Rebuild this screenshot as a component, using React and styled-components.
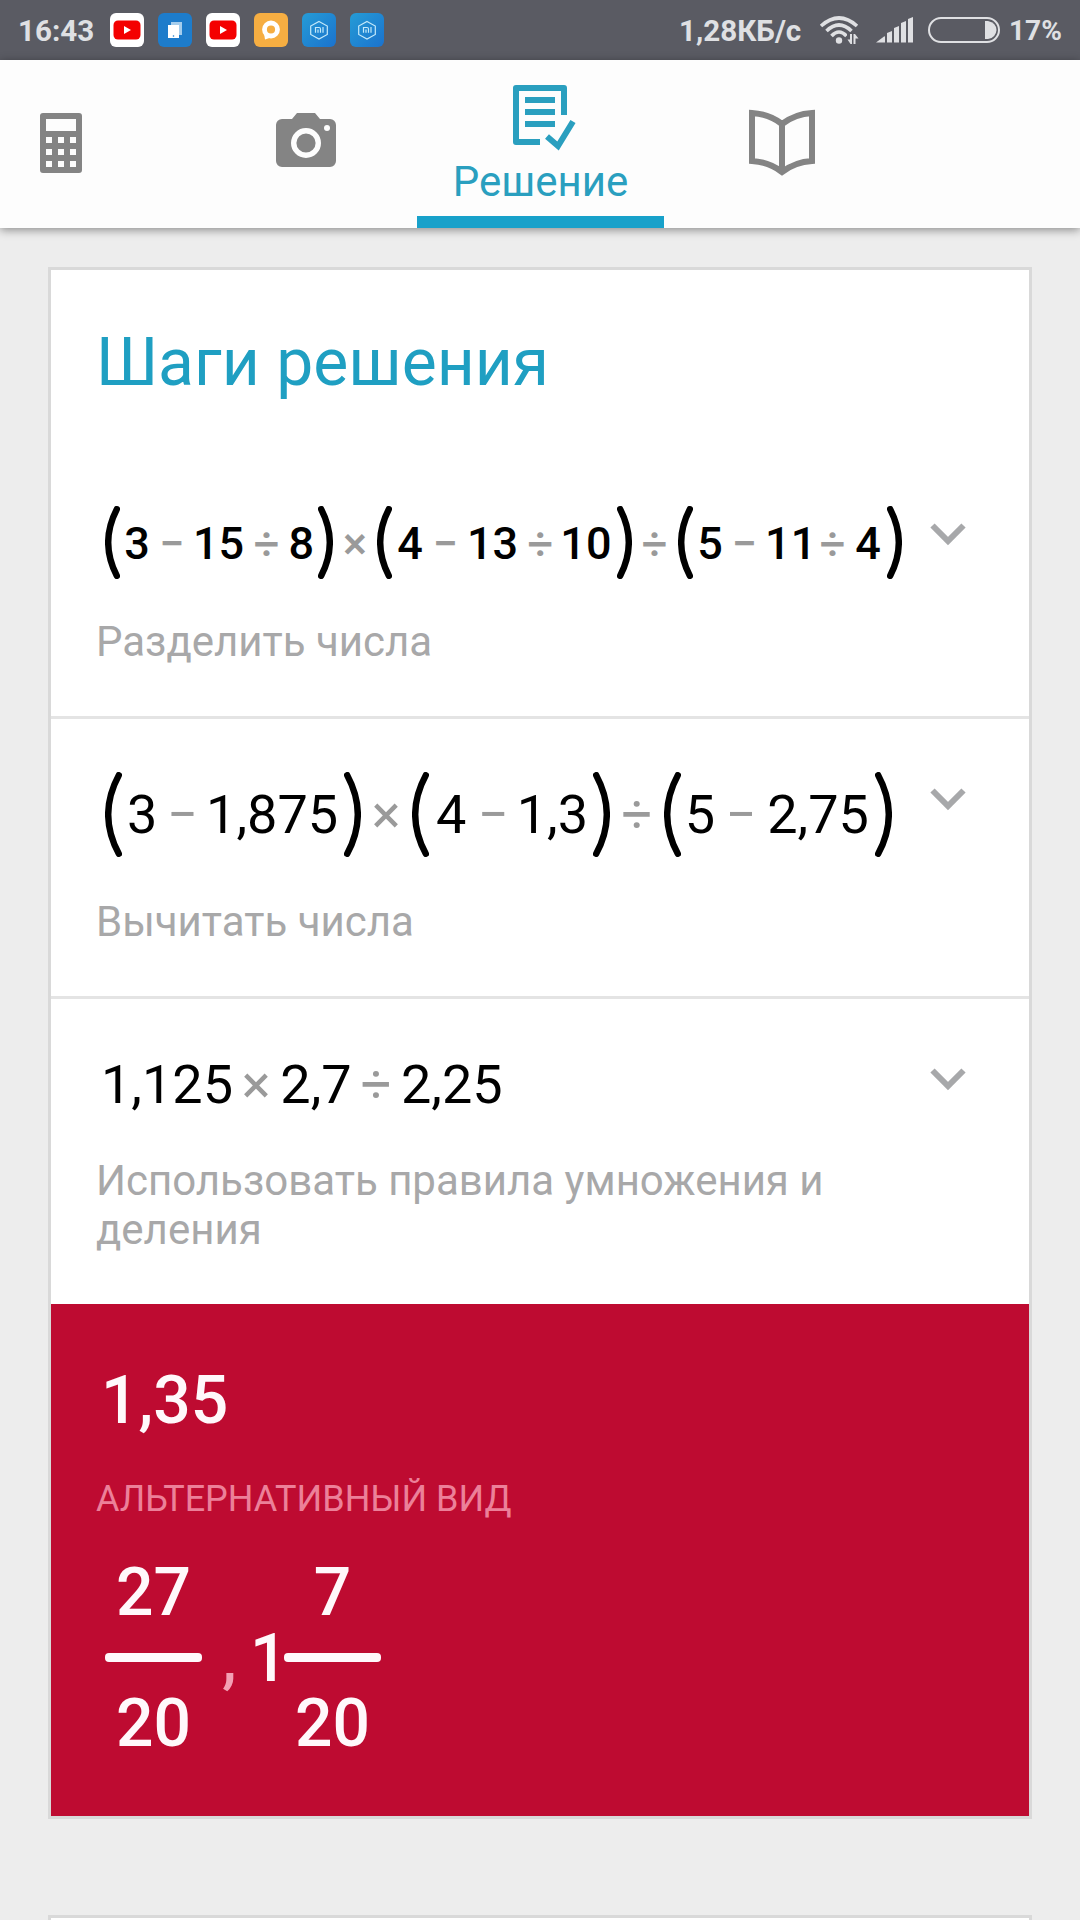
import React from "react";
import styled, { createGlobalStyle, css } from "styled-components";

const GlobalStyle = createGlobalStyle`
  * {
    box-sizing: border-box;
  }

  body {
    margin: 0;
    background: #ededed;
    font-family: Roboto, "Noto Sans", sans-serif;
  }
`;

const Screen = styled.div`
  display: flex;
  flex-direction: column;
  width: 1080px;
  height: 1920px;
  overflow: hidden;
  background: #ededed;
`;

const StatusBar = styled.div`
  display: flex;
  align-items: center;
  flex: none;
  height: 60px;
  padding: 0 19px 0 18px;
  background: #5a5b63;
  color: #dfe0e3;
`;

const StatusText = styled.span`
  width: ${(p) => p.$width}px;
  padding-top: 1px;
  font-size: ${(p) => p.$size}px;
  font-weight: 700;
  line-height: 60px;
  white-space: nowrap;
`;

const AppIcons = styled.div`
  display: flex;
  gap: 14px;
  margin-right: auto;

  svg {
    display: block;
  }
`;

const StatusIcon = styled.svg`
  display: block;
  flex: none;
  margin-right: ${(p) => p.$gap}px;
`;

const Tabs = styled.nav`
  position: relative;
  z-index: 1;
  display: flex;
  flex: none;
  height: 168px;
  background: #fdfdfd;
  box-shadow: 0 2px 9px rgba(0, 0, 0, 0.42);
`;

const Tab = styled.div`
  display: flex;
  flex-direction: column;
  align-items: center;
  justify-content: center;
  width: ${(p) => p.$width}px;
  margin-right: ${(p) => p.$gap || 0}px;
  padding-bottom: 2px;
  color: #848484;

  svg {
    display: block;
    overflow: visible;
  }

  ${(p) =>
    p.$active &&
    css`
      justify-content: flex-start;
      padding-top: 25px;
      color: #2a9fbf;
      border-bottom: 12px solid #18a1ca;
    `}
`;

const TabLabel = styled.span`
  margin-top: 6px;
  font-size: 42px;
  line-height: 49px;
`;

const Card = styled.section`
  flex: none;
  width: 984px;
  min-height: 60px;
  margin: ${(p) => p.$top}px 48px 0;
  border: 3px solid #d9d9d9;
  background: #fff;
`;

const Title = styled.h1`
  height: 163px;
  margin: 0;
  padding: 54px 0 0 45px;
  color: #1f9fc2;
  font-size: 66px;
  font-weight: 400;
  line-height: 78px;
`;

const Step = styled.div`
  display: flex;
  justify-content: space-between;
  height: ${(p) => p.$height}px;
  padding: ${(p) => p.$top}px 63px 0 45px;

  & + & {
    border-top: 3px solid #e4e4e4;
  }
`;

const StepBody = styled.div`
  width: 830px;
`;

const Expression = styled.div`
  display: flex;
  align-items: center;
  height: ${(p) => p.$height}px;
  padding-left: 9px;
  color: #000;
  font-size: ${(p) => p.$size}px;
  font-weight: ${(p) => p.$weight};
  line-height: 1;
  white-space: nowrap;
`;

const Num = styled.span`
  flex: none;
  width: ${(p) => p.$width}px;
  padding-top: 1px;
  text-indent: ${(p) => p.$indent || 0}px;
`;

const Operator = styled.span`
  display: flex;
  justify-content: center;
  flex: none;
  width: ${(p) => p.$width}px;
  padding-top: 1px;
  color: #9a9a9a;
`;

const ParenBox = styled.span`
  display: flex;
  justify-content: ${(p) => (p.$close ? "flex-end" : "flex-start")};
  flex: none;
  width: ${(p) => p.$width}px;

  svg {
    display: block;
    transform: ${(p) => (p.$close ? "scaleX(-1)" : "none")};
  }
`;

const Hint = styled.p`
  margin: ${(p) => p.$top}px 0 0;
  color: #a8a8a9;
  font-size: 42px;
  line-height: 49px;
`;

const Chevron = styled.svg`
  display: block;
  flex: none;
  margin-top: ${(p) => p.$top}px;
`;

const Result = styled.div`
  height: 512px;
  padding: 58px 0 0 45px;
  background: #be0b31;
  color: #fff8fb;
`;

const Answer = styled.div`
  padding-left: 5px;
  font-size: 66px;
  font-weight: 500;
  line-height: 78px;
`;

const AltLabel = styled.div`
  margin-top: 38px;
  color: #ec8099;
  font-size: 36px;
  line-height: 42px;
`;

const AltForms = styled.div`
  display: flex;
  align-items: center;
  margin-top: 34px;
  padding-left: 9px;
  font-size: 66px;
  font-weight: 500;
  line-height: 78px;
`;

const Fraction = styled.div`
  display: flex;
  flex-direction: column;
  align-items: center;
  width: 97px;
`;

const FractionBar = styled.div`
  width: 97px;
  height: 9px;
  margin: 21px 0 23px;
  border-radius: 4px;
  background: #fff8fb;
`;

const Comma = styled.span`
  width: 48px;
  padding-left: 20px;
  color: #f3a0b4;
`;

const Whole = styled.span`
  width: 34px;
`;

const YoutubeIcon = () => (
  <svg width="34" height="34" viewBox="0 0 34 34">
    <rect width="34" height="34" rx="6" fill="#fff" />
    <rect x="3.5" y="7.5" width="27" height="19" rx="4.5" fill="#f40000" />
    <path d="M14 13v8l7-4z" fill="#fff" />
  </svg>
);

const CopyIcon = () => (
  <svg width="34" height="34" viewBox="0 0 34 34">
    <rect width="34" height="34" rx="6" fill="#1d7ccb" />
    <path d="M13 9h11v13H13z" fill="#a5cdec" />
    <path d="M10 12h11v13H10z" fill="#fff" />
    <circle cx="15.5" cy="23" r="0.8" fill="#1d7ccb" />
  </svg>
);

const ChatIcon = () => (
  <svg width="34" height="34" viewBox="0 0 34 34">
    <rect width="34" height="34" rx="6" fill="#f6ae42" />
    <circle cx="17" cy="16.5" r="6.5" fill="none" stroke="#fff" strokeWidth="4.8" />
    <path d="M10 20l1 6.500 6-2z" fill="#fff" />
  </svg>
);

const MiIcon = () => (
  <svg width="34" height="34" viewBox="0 0 34 34">
    <defs>
      <linearGradient id="mi" x1="0" y1="0" x2="1" y2="1">
        <stop offset="0" stopColor="#259cd6" />
        <stop offset="1" stopColor="#1b72cd" />
      </linearGradient>
    </defs>
    <rect width="34" height="34" rx="6" fill="url(#mi)" />
    <g fill="none" stroke="#c4e9fa" strokeWidth="1.2">
      <path d="M17 8.500l8.300 4.500v8.500L17 26l-8.300-4.500V13z" />
      <path d="M13.500 19.700v-5.200h3.500q1.500 0 1.500 1.500v3.700M16 16.500v3.200M21 14v5.700" />
    </g>
  </svg>
);

const Paren = ({ close, width, height }) => {
  const w = height > 80 ? 17 : 15;
  const stroke = 6.4;
  const r = stroke / 2;
  return (
    <ParenBox $close={close} $width={width}>
      <svg width={w} height={height} viewBox={`0 0 ${w} ${height}`}>
        <path
          d={`M${w - r} ${r}Q${r * 3 - w} ${height / 2} ${w - r} ${height - r}`}
          fill="none"
          stroke="#000"
          strokeWidth={stroke}
          strokeLinecap="round"
        />
      </svg>
    </ParenBox>
  );
};

// tokens: [text, width, indent]
const steps = [
  {
    height: 283,
    top: 73,
    size: 45,
    weight: 500,
    exprHeight: 73,
    hintTop: 38,
    chevronTop: 17,
    hint: "Разделить числа",
    tokens: [
      ["(", 19.3], ["3", 25.3], ["−", 44.6], ["15", 50.6, -1.3], ["÷", 43.8], ["8", 25.3], [")", 19.4],
      ["×", 43.6],
      ["(", 20.4], ["4", 25.3], ["−", 45.7], ["13", 50.6, -1.3], ["÷", 42.8], ["10", 50.6, -1.3], [")", 19.3],
      ["÷", 46],
      ["(", 19.7], ["5", 25.3], ["−", 43.9], ["11", 43.8, -1.3], ["÷", 45], ["4", 25.3], [")", 21.4],
    ],
  },
  {
    height: 280,
    top: 53,
    size: 54,
    weight: 400,
    exprHeight: 85,
    hintTop: 40,
    chevronTop: 16,
    hint: "Вычитать числа",
    tokens: [
      ["(", 22], ["3", 30.3], ["−", 51], ["1,875", 129.3, -2.2], [")", 23.4],
      ["×", 50.6],
      ["(", 24.5], ["4", 30.3], ["−", 54.2], ["1,3", 66.4, -3.9], [")", 23],
      ["÷", 54],
      ["(", 20.7], ["5", 30.3], ["−", 52.3], ["2,75", 101.5], [")", 23.2],
    ],
  },
  {
    height: 308,
    top: 55,
    size: 54,
    weight: 400,
    exprHeight: 60,
    hintTop: 42,
    chevronTop: 14,
    hint: "Использовать правила умножения и деления",
    tokens: [["1,125", 127, -4], ["×", 48.3], ["2,7", 71.2], ["÷", 49.5], ["2,25", 101.5]],
  },
];

const renderToken = ([text, width, indent], step, i) => {
  if (text === "(" || text === ")") {
    return <Paren key={i} close={text === ")"} width={width} height={step.exprHeight} />;
  }
  if (/\d/.test(text)) {
    return (
      <Num key={i} $width={width} $indent={indent}>
        {text}
      </Num>
    );
  }
  return (
    <Operator key={i} $width={width}>
      {text}
    </Operator>
  );
};

const App = () => {
  return (
    <Screen>
      <GlobalStyle />

      <StatusBar>
        <StatusText $width={92} $size={29.6}>16:43</StatusText>
        <AppIcons>
          <YoutubeIcon />
          <CopyIcon />
          <YoutubeIcon />
          <ChatIcon />
          <MiIcon />
          <MiIcon />
        </AppIcons>
        <StatusText $width={140} $size={29.6}>1,28КБ/с</StatusText>
        <StatusIcon width="40" height="30" viewBox="0 0 40 30" $gap={17}>
          <g fill="none" stroke="#dfe0e3" strokeWidth="3.6">
            <path d="M2 11Q20 -5 38 11" />
            <path d="M7.500 16Q20 4 32.500 16" />
            <path d="M12.500 21Q20 13 27.500 21" />
          </g>
          <circle cx="20" cy="25.500" r="3.200" fill="#dfe0e3" />
          <path d="M28 18.500h12V30H28z" fill="#5a5b63" />
          <path d="M33 19v10h-1.500l-3-4.500h2.500V19zM34.500 29V19H36l3.500 4.500h-3V29z" fill="#dfe0e3" />
        </StatusIcon>
        <StatusIcon width="37" height="26" viewBox="0 0 37 26" fill="#dfe0e3" $gap={15}>
          <path d="M0 25.500l8-6q1-.500 1 .500v5.500zM11 25.500V16l5-2v11.500zM18 25.500V11l5-2v16.500zM25 25.500V6l5-2v21.500zM32 25.500V2l5-2v25.500z" />
        </StatusIcon>
        <StatusIcon width="72" height="26" viewBox="0 0 72 26" $gap={9}>
          <rect x="1" y="1" width="70" height="24" rx="12" fill="none" stroke="#dfe0e3" strokeWidth="2" />
          <path d="M57 4h3q8 1.500 8.500 9-.500 7.500-8.500 9h-3z" fill="#dfe0e3" />
        </StatusIcon>
        <StatusText $width={52} $size={28}>17%</StatusText>
      </StatusBar>

      <Tabs>
        <Tab $width={122} $gap={73}>
          <svg width="42" height="60" viewBox="0 0 42 60" fill="currentColor">
            <path
              fillRule="evenodd"
              d="M3 0h36a3 3 0 0 1 3 3v54a3 3 0 0 1-3 3H3a3 3 0 0 1-3-3V3a3 3 0 0 1 3-3zM6 6v12h30V6zM6 24v6h6v-6zM18 24v6h6v-6zM30 24v6h6v-6zM6 36v6h6v-6zM18 36v6h6v-6zM30 36v6h6v-6zM6 48v6h6v-6zM18 48v6h6v-6zM30 48v6h6v-6z"
            />
          </svg>
        </Tab>
        <Tab $width={222}>
          <svg width="60" height="60" viewBox="0 0 60 60">
            <path
              d="M6 6h10l5-6h18l5 6h10a6 6 0 0 1 6 6v36a6 6 0 0 1-6 6H6a6 6 0 0 1-6-6V12a6 6 0 0 1 6-6z"
              fill="currentColor"
            />
            <circle cx="30" cy="30" r="12.3" fill="none" stroke="#fdfdfd" strokeWidth="5.4" />
            <circle cx="51" cy="15" r="3" fill="#fdfdfd" />
          </svg>
        </Tab>
        <Tab $width={247} $active>
          <svg width="56" height="66" viewBox="0 0 56 66" fill="none" stroke="currentColor" strokeWidth="6">
            <path d="M51 30V3H3v54h24" strokeLinejoin="round" />
            <path d="M12 15h30M12 27h30M12 39h30" />
            <path d="M34 51.500l11 9.500 15-24.500" />
          </svg>
          <TabLabel>Решение</TabLabel>
        </Tab>
        <Tab $width={236}>
          <svg width="66" height="66" viewBox="0 0 66 66" fill="none" stroke="currentColor" strokeWidth="6">
            <path d="M33 14Q20 4 3 3v48q17 1 30 11 13-10 30-11V3Q46 4 33 14zV62" />
          </svg>
        </Tab>
      </Tabs>

      <Card $top={39}>
        <Title>Шаги решения</Title>
        {steps.map((step) => (
          <Step key={step.hint} $height={step.height} $top={step.top}>
            <StepBody>
              <Expression $size={step.size} $weight={step.weight} $height={step.exprHeight}>
                {step.tokens.map((token, i) => renderToken(token, step, i))}
              </Expression>
              <Hint $top={step.hintTop}>{step.hint}</Hint>
            </StepBody>
            <Chevron width="36" height="23" viewBox="0 0 36 23" $top={step.chevronTop}>
              <path d="M2.500 2.500L18 18 33.500 2.500" fill="none" stroke="#a7a8aa" strokeWidth="6" />
            </Chevron>
          </Step>
        ))}
        <Result>
          <Answer>1,35</Answer>
          <AltLabel>АЛЬТЕРНАТИВНЫЙ ВИД</AltLabel>
          <AltForms>
            <Fraction>
              <span>27</span>
              <FractionBar />
              <span>20</span>
            </Fraction>
            <Comma>,</Comma>
            <Whole>1</Whole>
            <Fraction>
              <span>7</span>
              <FractionBar />
              <span>20</span>
            </Fraction>
          </AltForms>
        </Result>
      </Card>

      <Card $top={96} />
    </Screen>
  );
};

export default App;
